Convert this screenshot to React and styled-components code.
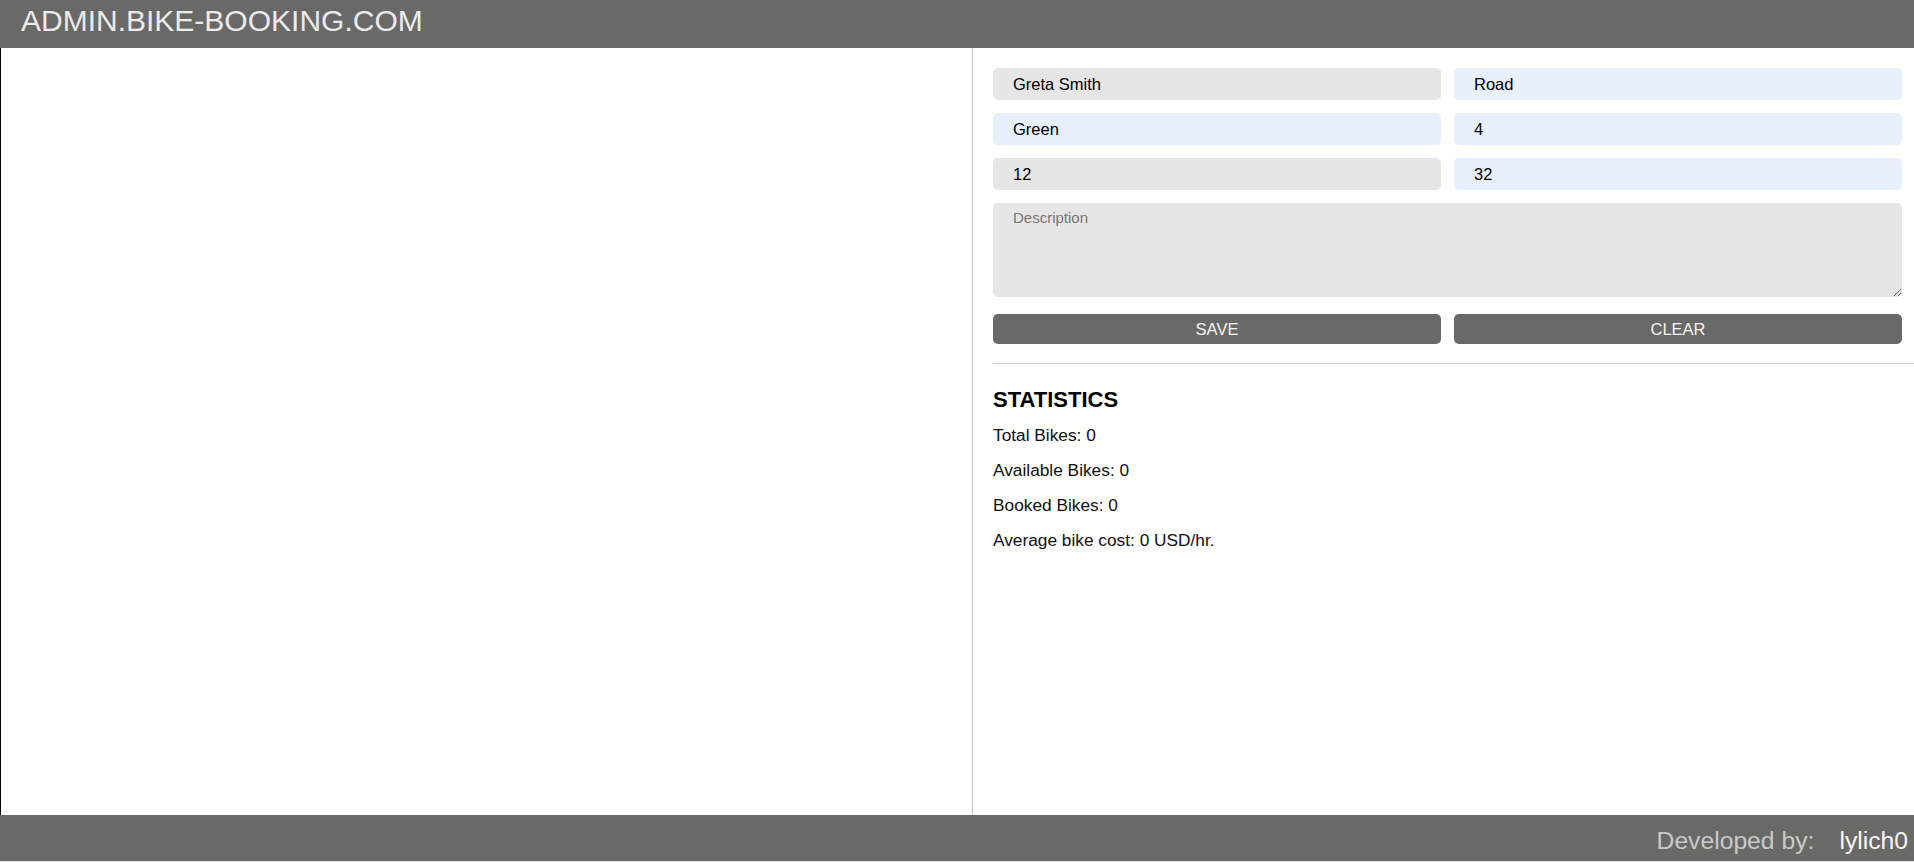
import React from 'react'
import styled, { createGlobalStyle } from 'styled-components'

const GlobalStyle = createGlobalStyle`
  html, body {
    margin: 0;
    padding: 0;
    background: #fefefc;
    font-family: "Liberation Sans", Arial, sans-serif;
  }
  * {
    box-sizing: border-box;
  }
`

const Page = styled.div`
  display: flex;
  flex-direction: column;
  height: 100vh;
`

const Header = styled.header`
  height: 48px;
  flex-shrink: 0;
  display: flex;
  align-items: center;
  padding: 0 0 6px 21px;
  background: #696967;
  color: #ebebeb;
  font-size: 30px;
`

const Main = styled.main`
  flex: 1;
  display: flex;
  border-left: 1px solid #000;
  min-height: 0;
`

const ListPanel = styled.section`
  width: 972px;
  flex-shrink: 0;
  border-right: 1px solid #c4c4c4;
`

const SidePanel = styled.aside`
  flex: 1;
  padding: 20px 0 0 20px;
`

const Form = styled.form`
  display: grid;
  grid-template-columns: 1fr 1fr;
  gap: 13px;
  padding-right: 12px;
`

const Field = styled.input`
  height: 32px;
  border: none;
  border-radius: 5px;
  padding: 0 20px;
  background: ${(p) => (p.$autofill ? '#e8f0fe' : '#e6e6e6')};
  color: #000;
  font-family: inherit;
  font-size: 16.5px;
  outline: none;
`

const Description = styled.textarea`
  grid-column: 1 / -1;
  height: 94px;
  border: none;
  border-radius: 5px;
  padding: 6px 20px;
  background: #e6e6e6;
  font-family: inherit;
  font-size: 15px;
  outline: none;
  resize: vertical;
  display: block;

  &::placeholder {
    color: #777;
  }
`

const Button = styled.button`
  height: 30px;
  margin-top: 4px;
  border: none;
  border-radius: 5px;
  background: #696967;
  color: #f4f4f4;
  font-family: inherit;
  font-size: 16.5px;
  text-transform: uppercase;
  cursor: pointer;
`

const Divider = styled.hr`
  margin: 19px 0 0;
  border: none;
  border-top: 1px solid #c8c8c8;
`

const Stats = styled.div`
  padding-top: 23px;
`

const StatsTitle = styled.h2`
  margin: 0 0 13px;
  font-size: 22px;
  line-height: 26px;
  font-weight: bold;
  color: #000;
`

const StatsList = styled.div`
  display: flex;
  flex-direction: column;
  gap: 17px;
`

const StatLine = styled.p`
  margin: 0;
  font-size: 17.3px;
  line-height: 18px;
  color: #111;
`

const Footer = styled.footer`
  height: 47px;
  flex-shrink: 0;
  display: flex;
  align-items: center;
  justify-content: flex-end;
  padding: 6px 6px 0 0;
  background: #696967;
  border-bottom: 1px solid #e2e2e2;
  font-size: 24.7px;
`

const FooterLabel = styled.span`
  color: #c9c9c9;
`

const FooterName = styled.span`
  margin-left: 25px;
  color: #f6f6f6;
`

const fields = [
  { value: 'Greta Smith', autofill: false },
  { value: 'Road', autofill: true },
  { value: 'Green', autofill: true },
  { value: '4', autofill: true },
  { value: '12', autofill: false },
  { value: '32', autofill: true },
]

const stats = [
  'Total Bikes: 0',
  'Available Bikes: 0',
  'Booked Bikes: 0',
  'Average bike cost: 0 USD/hr.',
]

export default function App() {
  return (
    <Page>
      <GlobalStyle />
      <Header>ADMIN.BIKE-BOOKING.COM</Header>
      <Main>
        <ListPanel />
        <SidePanel>
          <Form onSubmit={(e) => e.preventDefault()}>
            {fields.map((f, i) => (
              <Field key={i} value={f.value} $autofill={f.autofill} readOnly />
            ))}
            <Description placeholder="Description" />
            <Button type="submit">Save</Button>
            <Button type="button">Clear</Button>
          </Form>
          <Divider />
          <Stats>
            <StatsTitle>STATISTICS</StatsTitle>
            <StatsList>
              {stats.map((s) => (
                <StatLine key={s}>{s}</StatLine>
              ))}
            </StatsList>
          </Stats>
        </SidePanel>
      </Main>
      <Footer>
        <FooterLabel>Developed by:</FooterLabel>
        <FooterName>lylich0</FooterName>
      </Footer>
    </Page>
  )
}
